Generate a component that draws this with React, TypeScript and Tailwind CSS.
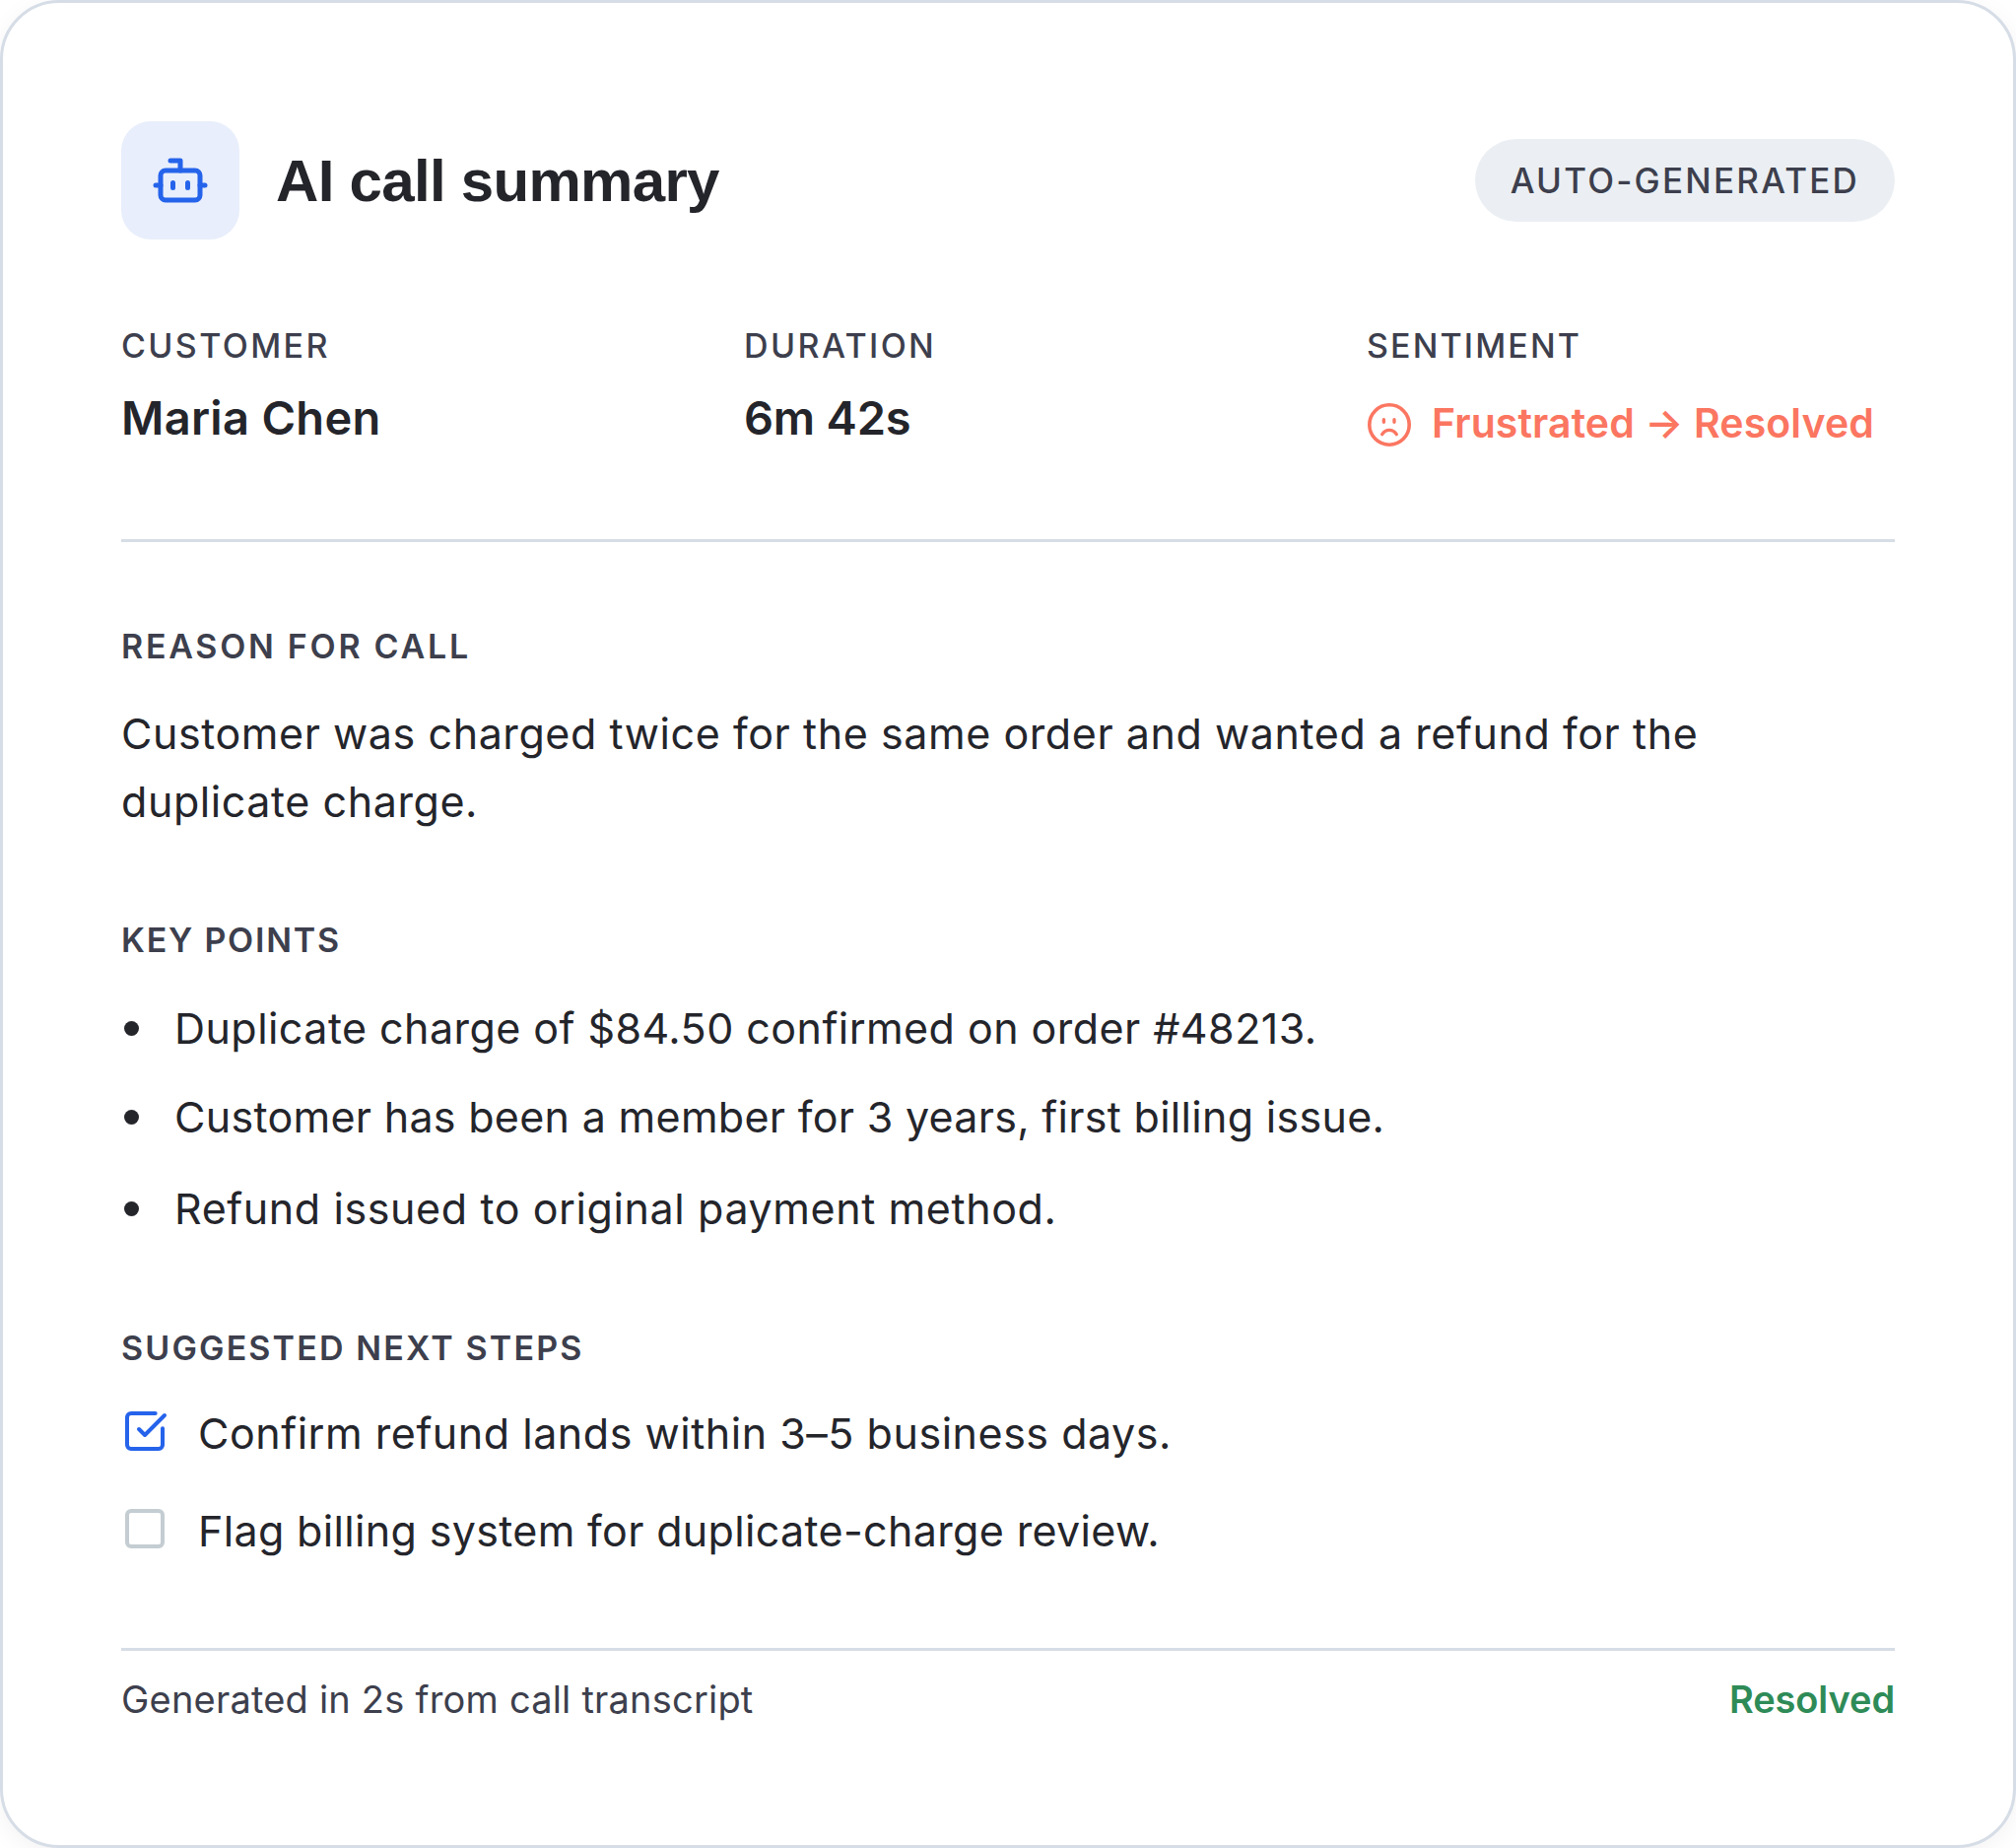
import { Bot, Square, SquareCheckBig } from "lucide-react";

const font = "font-['Inter',sans-serif]";
const body = "text-[43px] leading-[69px] text-[#24252b]";

function Label({ children, className = "font-medium tracking-[0.065em]" }: { children: React.ReactNode; className?: string }) {
  return <div className={`text-[34px] leading-[44px] text-[#3d3f4d] ${className}`}>{children}</div>;
}

export default function App() {
  return (
    <div className={`w-[2046px] h-[1875px] bg-white ${font}`}>
      <div className="h-full rounded-[60px] border-[3px] border-[#d6dde6] bg-white px-[120px] pt-[120px] shadow-[0_6px_24px_rgba(0,0,0,0.05)]">
        <header className="flex items-center justify-between h-[120px]">
          <div className="flex items-center gap-[37px]">
            <div className="flex items-center justify-center w-[120px] h-[120px] rounded-[30px] bg-[#e8eefb]">
              <Bot size={60} strokeWidth={2} className="text-[#2563eb]" />
            </div>
            <h1 className="font-['Liberation_Sans',sans-serif] font-bold text-[60px] leading-[74px] pt-[2px] tracking-[-0.7px] text-[#24252b]">AI call summary</h1>
          </div>
          <span className="flex items-center h-[84px] px-[36px] rounded-full bg-[#ebeff3] text-[35px] font-medium tracking-[0.063em] text-[#3d3f4d]">AUTO-GENERATED</span>
        </header>

        <div className="grid grid-cols-3 gap-x-[96px] mt-[86px] pb-[92px] border-b-[3px] border-[#d6dde6]">
          <div>
            <Label className="font-medium tracking-[0.07em]">CUSTOMER</Label>
            <div className="mt-[21px] text-[47px] leading-[60px] font-semibold tracking-[0.3px] text-[#24252b]">Maria Chen</div>
          </div>
          <div>
            <Label className="font-medium tracking-[0.07em]">DURATION</Label>
            <div className="mt-[21px] text-[47px] leading-[60px] font-semibold tracking-[-0.2px] text-[#24252b]">6m 42s</div>
          </div>
          <div>
            <Label className="font-medium tracking-[0.062em]">SENTIMENT</Label>
            <div className="mt-[22px] flex items-center gap-[22px] h-[60px] text-[41px] font-semibold tracking-[0.1px] text-[#fb7661]">
              <svg width="44" height="44" viewBox="0 0 44 44" fill="none" stroke="currentColor" strokeLinecap="round" className="shrink-0 ml-[1px] mt-[11px]">
                <circle cx="22" cy="22" r="20.2" strokeWidth="3.6" />
                <path d="M16.4 16.8v2.4M27 16.8v2.4" strokeWidth="3.4" />
                <path d="M14.7 31.6c1.9-2.8 4.6-4.2 7.3-4.2s5.4 1.4 7.3 4.2" strokeWidth="3.4" />
              </svg>
              <span className="mt-[10px] -ml-[1px]">Frustrated → Resolved</span>
            </div>
          </div>
        </div>

        <section className="mt-[84px]">
          <Label className="font-semibold tracking-[0.08em]">REASON FOR CALL</Label>
          <p className={`mt-[32px] max-w-[1700px] tracking-[0.57px] ${body}`}>
            Customer was charged twice for the same order and wanted a refund for the duplicate charge.
          </p>
        </section>

        <section className="mt-[84px]">
          <Label className="font-semibold tracking-[0.052em]">KEY POINTS</Label>
          <ul className={`mt-[33px] flex flex-col ${body}`}>
            <li className="flex items-center gap-[36px] tracking-[0.45px]">
              <span className="ml-[3px] w-[15px] h-[15px] rounded-full bg-[#24252b] shrink-0" />
              <span>Duplicate charge of $84.50 confirmed on order #48213.</span>
            </li>
            <li className="mt-[21px] flex items-center gap-[36px] tracking-[0.3px]">
              <span className="ml-[3px] w-[15px] h-[15px] rounded-full bg-[#24252b] shrink-0" />
              <span>Customer has been a member for 3 years, first billing issue.</span>
            </li>
            <li className="mt-[24px] flex items-center gap-[36px] tracking-[0.6px]">
              <span className="ml-[3px] w-[15px] h-[15px] rounded-full bg-[#24252b] shrink-0" />
              <span>Refund issued to original payment method.</span>
            </li>
          </ul>
        </section>

        <section className="mt-[85px]">
          <Label className="font-semibold tracking-[0.063em]">SUGGESTED NEXT STEPS</Label>
          <div className={`mt-[30px] flex flex-col gap-[30px] ${body}`}>
            <div className="flex items-center gap-[30px] tracking-[0.53px]">
              <SquareCheckBig size={48} strokeWidth={2} className="text-[#2563eb] shrink-0 mb-[6px]" />
              <span>Confirm refund lands within 3–5 business days.</span>
            </div>
            <div className="flex items-center gap-[30px] tracking-[0.34px]">
              <Square size={48} strokeWidth={2} className="text-[#c4cdd2] shrink-0 mb-[6px]" />
              <span>Flag billing system for duplicate-charge review.</span>
            </div>
          </div>
        </section>

        <footer className="mt-[84px] border-t-[3px] border-[#d6dde6] pt-[25px] flex items-center justify-between text-[38px] leading-[48px]">
          <span className="text-[#3d3f4d] tracking-[0.2px]">Generated in 2s from call transcript</span>
          <span className="font-semibold text-[#2e8b57] tracking-[-0.1px]">Resolved</span>
        </footer>
      </div>
    </div>
  );
}
